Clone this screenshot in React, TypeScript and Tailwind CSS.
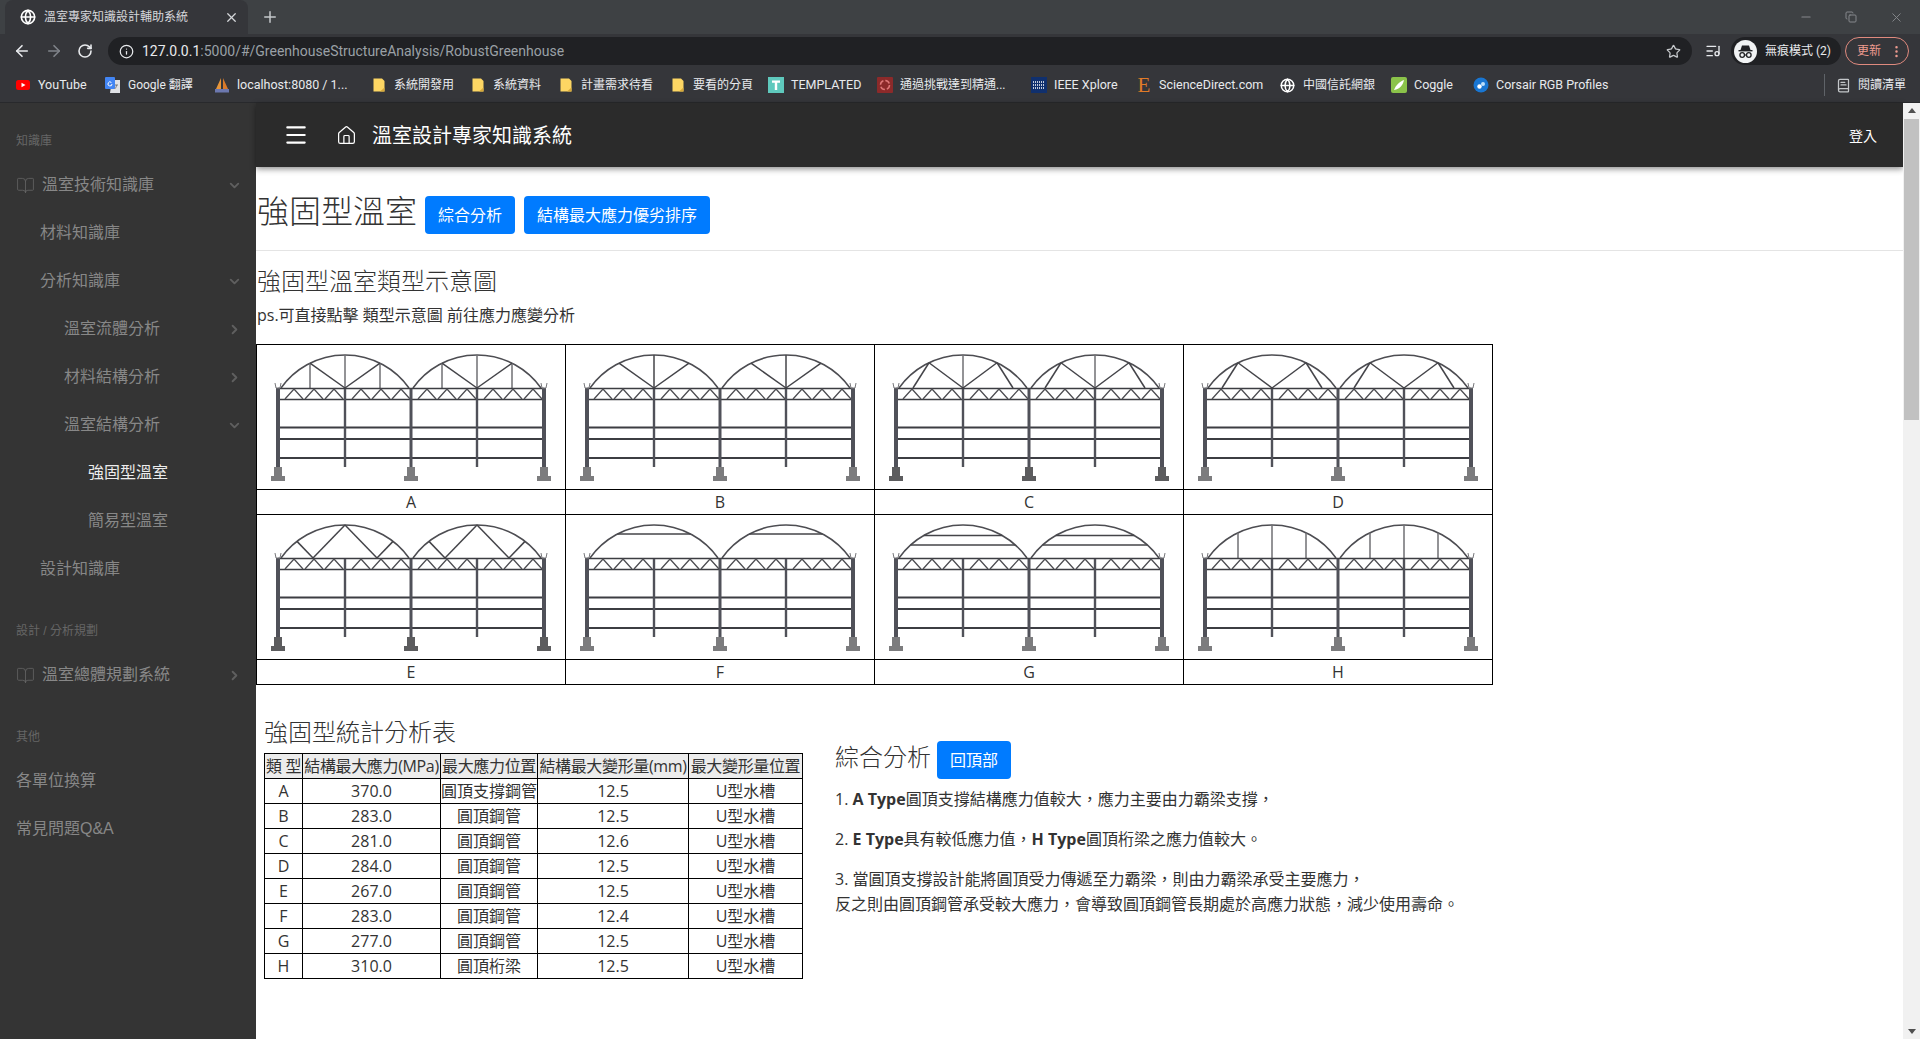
import React from "react";
import { ArrowLeft, ArrowRight, RotateCw, Info, Star, X, Plus, Minus, Copy, Globe, Menu, House, BookOpen, ChevronDown, ChevronRight, EllipsisVertical, ListMusic, BookText } from "lucide-react";

const R = 78.5;
const archY = (c: number, x: number) => 88.5 - Math.sqrt(R * R - (x - c) * (x - c));

function Braces({ type, c }: { type: string; c: number }) {
  const line = "#444449";
  const soft = "#6f6f73";
  const top = (dx: number) => archY(c, c + dx);
  const seg = (x1: number, y1: number, x2: number, y2: number, col = line, w = 1.5) => (
    <line key={`${x1}-${y1}-${x2}-${y2}`} x1={x1} y1={y1} x2={x2} y2={y2} stroke={col} strokeWidth={w} />
  );
  const bar = (y: number) => {
    const h = Math.sqrt(R * R - (88.5 - y) * (88.5 - y));
    return seg(c - h, y, c + h, y, line, 1.5);
  };
  const out: React.ReactNode[] = [];
  if (type === "A") {
    out.push(seg(c, 10, c, 43, soft, 1.5), seg(c - 35, top(35), c - 35, 43, soft), seg(c + 35, top(35), c + 35, 43, soft));
    out.push(seg(c - 35, top(35), c, 43), seg(c + 35, top(35), c, 43));
  }
  if (type === "B") {
    out.push(seg(c, 10, c, 43, line, 1.5), seg(c - 35, top(35), c, 43), seg(c + 35, top(35), c, 43));
  }
  if (type === "C" || type === "D") {
    if (type === "C") out.push(seg(c, 10, c, 43, soft, 1.5));
    out.push(seg(c - 34, top(34), c, 43), seg(c + 34, top(34), c, 43));
    out.push(seg(c - 34, top(34), c - 50, 43), seg(c + 34, top(34), c + 50, 43));
  }
  if (type === "E") {
    out.push(seg(c, 10, c - 32, 43), seg(c, 10, c + 32, 43), seg(c - 48, top(48), c - 32, 43), seg(c + 48, top(48), c + 32, 43));
  }
  if (type === "F") out.push(bar(19));
  if (type === "G") out.push(bar(20.5), bar(30));
  if (type === "H") {
    out.push(seg(c, 10, c, 43, soft, 1.5), seg(c - 34, top(34), c - 34, 43, soft), seg(c + 34, top(34), c + 34, 43, soft));
  }
  return <g>{out}</g>;
}

function Greenhouse({ type }: { type: string }) {
  const rail = "#3c3d42";
  const post = "#505159";
  const base = type === "C" || type === "E" ? "#5c5c5e" : "#7c7c7e";
  const bays = [21, 88, 154, 220];
  return (
    <svg viewBox="0 0 308 144" className="block h-[144px] w-full">
      <path d="M24 43A78.5 78.5 0 0 1 152 43" fill="none" stroke="#4d4d52" strokeWidth="1.6" />
      <path d="M156 43A78.5 78.5 0 0 1 284 43" fill="none" stroke="#4d4d52" strokeWidth="1.6" />
      <Braces type={type} c={88} />
      <Braces type={type} c={220} />
      <line x1="21" y1="43.5" x2="287" y2="43.5" stroke={rail} strokeWidth="1.6" />
      <line x1="21" y1="54.5" x2="287" y2="54.5" stroke={rail} strokeWidth="1.5" />
      {bays.map((s) =>
        [7, 27, 47].map((o) => (
          <polyline key={s + o} points={`${s + o},54 ${s + o + 9},44 ${s + o + 18},54`} fill="none" stroke="#4d4d52" strokeWidth="1.3" />
        ))
      )}
      {[82.5, 94, 113].map((y) => (
        <line key={y} x1="21" y1={y} x2="287" y2={y} stroke={rail} strokeWidth="1.9" />
      ))}
      {[88, 220].map((x) => (
        <line key={x} x1={x} y1="44" x2={x} y2="122" stroke={post} strokeWidth="2.4" />
      ))}
      <line x1="154" y1="44" x2="154" y2="122" stroke={post} strokeWidth="3" />
      {[21, 287].map((x) => (
        <g key={x}>
          <line x1={x} y1="43" x2={x} y2="122" stroke={post} strokeWidth="4" />
          <path d={`M${x - 3} 38L${x - 2} 43L${x + 2} 43L${x + 3} 38`} fill="none" stroke="#77777b" strokeWidth="1" />
        </g>
      ))}
      {[21, 154, 287].map((x) => (
        <g key={x} fill={base}>
          <rect x={x - 4} y="122" width="8" height="9.5" />
          <rect x={x - 7} y="131" width="14" height="5" />
        </g>
      ))}
    </svg>
  );
}

const Folder = () => (
  <svg width="16" height="16" viewBox="0 0 16 16">
    <path d="M2.5 1.5h8.5l2.5 2.5v10.5h-11z" fill="#fdd663" />
    <path d="M9 14.5l4.5-4v4z" fill="#d8a93a" />
  </svg>
);

const marks: { w: string; t: string; i: React.ReactNode }[] = [
  {
    w: "w-[90px]",
    t: "YouTube",
    i: (
      <svg width="16" height="16" viewBox="0 0 16 16">
        <rect x="1" y="3" width="14" height="10" rx="2.5" fill="#f00" />
        <path d="M6.5 5.8v4.4L10.5 8z" fill="#fff" />
      </svg>
    ),
  },
  {
    w: "w-[109px]",
    t: "Google 翻譯",
    i: (
      <svg width="16" height="16" viewBox="0 0 16 16">
        <path d="M7 3h8v13H5z" fill="#dfe1e5" />
        <rect x="0" y="0" width="10" height="12" rx="1" fill="#4285f4" />
        <path d="M7 7a2 2 0 1 1-.6-1.5" fill="none" stroke="#fff" strokeWidth="1" />
        <path d="M10 8h3M11.5 8c0 2-1 3-2 4" fill="none" stroke="#777" strokeWidth="1" />
      </svg>
    ),
  },
  {
    w: "w-[157px]",
    t: "localhost:8080 / 1...",
    i: (
      <svg width="16" height="16" viewBox="0 0 16 16">
        <path d="M7 1L2 12h5z" fill="#e8963a" />
        <path d="M9 1l5 11H9z" fill="#d97a2a" />
        <rect x="1" y="12" width="14" height="3.5" fill="#6c78af" />
      </svg>
    ),
  },
  { w: "w-[99px]", t: "系統開發用", i: <Folder /> },
  { w: "w-[88px]", t: "系統資料", i: <Folder /> },
  { w: "w-[112px]", t: "計畫需求待看", i: <Folder /> },
  { w: "w-[98px]", t: "要看的分頁", i: <Folder /> },
  {
    w: "w-[109px]",
    t: "TEMPLATED",
    i: (
      <svg width="16" height="16" viewBox="0 0 16 16">
        <rect width="16" height="16" fill="#5fc9bd" />
        <path d="M4 3.5h8v2.2H9.2V13H6.8V5.7H4z" fill="#fff" />
      </svg>
    ),
  },
  {
    w: "w-[154px]",
    t: "通過挑戰達到精通...",
    i: (
      <svg width="16" height="16" viewBox="0 0 16 16">
        <rect width="16" height="16" rx="1" fill="#8c2a2a" />
        <circle cx="8" cy="8" r="4.5" fill="none" stroke="#d77" strokeWidth="1.5" strokeDasharray="5 2" />
      </svg>
    ),
  },
  {
    w: "w-[105px]",
    t: "IEEE Xplore",
    i: (
      <svg width="16" height="16" viewBox="0 0 16 16">
        <rect width="16" height="16" fill="#10306e" />
        <path d="M2 5h12M2 8h12M2 11h12" stroke="#fff" strokeWidth="1.5" strokeDasharray="1 1" />
      </svg>
    ),
  },
  {
    w: "w-[144px]",
    t: "ScienceDirect.com",
    i: <span className="block w-4 text-center font-['Liberation_Serif',serif] text-[21px] leading-4 text-[#e07b28]">E</span>,
  },
  { w: "w-[111px]", t: "中國信託網銀", i: <Globe size={15} strokeWidth={2.4} className="text-white" /> },
  {
    w: "w-[82px]",
    t: "Coggle",
    i: (
      <svg width="16" height="16" viewBox="0 0 16 16">
        <rect width="16" height="16" rx="2" fill="#8bc34a" />
        <path d="M3 13c2-5 5-8 10-10-1 5-4 9-10 10z" fill="#fff" />
      </svg>
    ),
  },
  {
    w: "w-[130px]",
    t: "Corsair RGB Profiles",
    i: (
      <svg width="16" height="16" viewBox="0 0 16 16">
        <circle cx="8" cy="8" r="7.5" fill="#1976d2" />
        <circle cx="6.5" cy="9.5" r="2.2" fill="#fff" />
        <circle cx="10" cy="7" r="2" fill="#bbdefb" />
      </svg>
    ),
  },
];

const Incognito = () => (
  <svg width="23" height="23" viewBox="0 0 23 23">
    <circle cx="11.5" cy="11.5" r="11.5" fill="#f1f3f4" />
    <path d="M8 5.5h7l1.5 4.5h-10z" fill="#202124" />
    <rect x="4.5" y="10" width="14" height="1.4" fill="#202124" />
    <circle cx="8.2" cy="15" r="2.3" fill="none" stroke="#202124" strokeWidth="1.3" />
    <circle cx="14.8" cy="15" r="2.3" fill="none" stroke="#202124" strokeWidth="1.3" />
    <path d="M10.5 15h2" stroke="#202124" strokeWidth="1.2" />
  </svg>
);

function Chrome() {
  return (
    <div className="font-['Roboto','Noto_Sans_CJK_TC',sans-serif] text-[#e8eaed]">
      <div className="flex h-[34px] items-end bg-[#3e4144]">
        <div className="ml-[5px] flex h-[34px] w-[243px] items-center rounded-t-lg bg-[#35363a] pl-[15px] pr-[9px]">
          <Globe size={16} strokeWidth={2.4} className="shrink-0 text-white" />
          <span className="ml-[8px] flex-1 whitespace-nowrap text-[12px] text-[#d5d7da]">溫室專家知識設計輔助系統</span>
          <X size={15} className="text-[#d5d7da]" />
        </div>
        <div className="ml-[13px] flex h-[34px] items-center">
          <Plus size={18} className="text-[#c4c7ca]" />
        </div>
        <div className="ml-auto flex h-[34px] items-center gap-[32px] pr-[16px] text-[#85888c]">
          <Minus size={14} />
          <Copy size={12} />
          <X size={15} strokeWidth={1.5} />
        </div>
      </div>
      <div className="flex h-[34px] items-center bg-[#35363a]">
        <div className="flex w-[108px] items-center gap-[14px] pl-[13px]">
          <ArrowLeft size={18} strokeWidth={2.2} className="text-[#e8eaed]" />
          <ArrowRight size={18} strokeWidth={2.2} className="text-[#80848a]" />
          <RotateCw size={16} strokeWidth={2.4} className="text-[#e8eaed]" />
        </div>
        <div className="flex h-[28px] w-[1584px] items-center rounded-full bg-[#202124] pl-[11px] pr-[11px]">
          <Info size={15} strokeWidth={2} className="text-[#e8eaed]" />
          <span className="ml-[8px] whitespace-nowrap pt-[1px] text-[14px] text-[#9aa0a6]">
            <span className="text-[#e8eaed]">127.0.0.1</span>:5000/#/GreenhouseStructureAnalysis/RobustGreenhouse
          </span>
          <Star size={15} className="ml-auto text-[#c6c9cc]" />
        </div>
        <ListMusic size={16} className="ml-[13px] text-[#e8eaed]" />
        <div className="ml-[10px] flex h-[28px] w-[110px] items-center rounded-full bg-[#202124] pl-[3px]">
          <span className="block h-[23px] w-[23px]">
            <Incognito />
          </span>
          <span className="ml-[8px] whitespace-nowrap text-[12px] text-[#e8eaed]">無痕模式 (2)</span>
        </div>
        <div className="ml-[4px] flex h-[28px] w-[64px] items-center justify-between rounded-full border border-[#e08a7e] pl-[11px] pr-[4px] text-[12px] text-[#ee9b8f]">
          更新
          <EllipsisVertical size={15} />
        </div>
      </div>
      <div className="flex h-[34px] items-center bg-[#35363a] pl-[15px] text-[12px] text-[#e8eaed]">
        {marks.map((m) => (
          <div
            key={m.t}
            className={`${m.w} flex shrink-0 items-center gap-[7px] whitespace-nowrap ${/^[\x00-\x7f]+$/.test(m.t) ? "text-[12.5px]" : "text-[12px]"}`}
          >
            <span className="block w-4 shrink-0">{m.i}</span>
            {m.t}
          </div>
        ))}
        <div className="ml-[221px] h-[22px] w-px bg-[#5f6368]" />
        <BookText size={15} className="ml-[11px] text-[#c4c7ca]" />
        <span className="ml-[7px] whitespace-nowrap">閱讀清單</span>
      </div>
      <div className="h-px bg-[#28292c]" />
    </div>
  );
}

type Row = { t: string; pl: string; chev?: "d" | "r"; book?: boolean; active?: boolean };

const Head = ({ t }: { t: string }) => (
  <div className="mt-[18px] flex h-10 items-center pl-4 text-[12px] text-[#666]">{t}</div>
);

const Item = ({ t, pl, chev, book, active }: Row) => (
  <div className={`flex h-12 items-center ${pl} pr-[14px] text-[16px] ${active ? "text-[#ececec]" : "text-[#878787]"}`}>
    {book && <BookOpen size={19} strokeWidth={1} className="mr-[7px] text-[#666]" />}
    <span className="whitespace-nowrap">{t}</span>
    {chev === "d" && <ChevronDown size={15} strokeWidth={3} className="ml-auto text-[#5f5f5f]" />}
    {chev === "r" && <ChevronRight size={15} strokeWidth={3} className="ml-auto text-[#5f5f5f]" />}
  </div>
);

function Sidebar() {
  return (
    <aside className="h-full w-[256px] shrink-0 bg-[#343434] font-['Liberation_Sans','Noto_Sans_CJK_TC',sans-serif]">
      <Head t="知識庫" />
      <Item t="溫室技術知識庫" pl="pl-4" chev="d" book />
      <Item t="材料知識庫" pl="pl-[40px]" />
      <Item t="分析知識庫" pl="pl-[40px]" chev="d" />
      <Item t="溫室流體分析" pl="pl-[64px]" chev="r" />
      <Item t="材料結構分析" pl="pl-[64px]" chev="r" />
      <Item t="溫室結構分析" pl="pl-[64px]" chev="d" />
      <Item t="強固型溫室" pl="pl-[88px]" active />
      <Item t="簡易型溫室" pl="pl-[88px]" />
      <Item t="設計知識庫" pl="pl-[40px]" />
      <Head t="設計 / 分析規劃" />
      <Item t="溫室總體規劃系統" pl="pl-4" chev="r" book />
      <Head t="其他" />
      <Item t="各單位換算" pl="pl-4" />
      <Item t="常見問題Q&A" pl="pl-4" />
    </aside>
  );
}

const rowsA = ["A", "B", "C", "D"];
const rowsB = ["E", "F", "G", "H"];

function Diagrams() {
  const row = (list: string[]) => (
    <>
      <tr>
        {list.map((t) => (
          <td key={t} className="border border-black p-0">
            <Greenhouse type={t} />
          </td>
        ))}
      </tr>
      <tr className="h-[24px]">
        {list.map((t) => (
          <td key={t} className="border border-black p-0 text-center text-[16px] leading-[24px] text-[#333]">
            {t}
          </td>
        ))}
      </tr>
    </>
  );
  return (
    <table className="mt-[17px] w-[1237px] table-fixed border-collapse">
      <tbody>
        {row(rowsA)}
        {row(rowsB)}
      </tbody>
    </table>
  );
}

const stats = [
  ["A", "370.0", "圓頂支撐鋼管", "12.5"],
  ["B", "283.0", "圓頂鋼管", "12.5"],
  ["C", "281.0", "圓頂鋼管", "12.6"],
  ["D", "284.0", "圓頂鋼管", "12.5"],
  ["E", "267.0", "圓頂鋼管", "12.5"],
  ["F", "283.0", "圓頂鋼管", "12.4"],
  ["G", "277.0", "圓頂鋼管", "12.5"],
  ["H", "310.0", "圓頂桁梁", "12.5"],
];

function StatTable() {
  const th = "border border-black bg-[#ececec] p-0 text-center font-normal tracking-[-0.35px] whitespace-nowrap";
  const td = "border border-black p-0 text-center whitespace-nowrap";
  return (
    <table className="mt-[3px] w-[538px] table-fixed border-collapse text-[16px] leading-[24px] text-[#333]">
      <colgroup>
        <col className="w-[38px]" />
        <col className="w-[138px]" />
        <col className="w-[97px]" />
        <col className="w-[151px]" />
        <col className="w-[114px]" />
      </colgroup>
      <thead>
        <tr className="h-[25px]">
          <th className={th}>類 型</th>
          <th className={th}>結構最大應力(MPa)</th>
          <th className={th}>最大應力位置</th>
          <th className={th}>結構最大變形量(mm)</th>
          <th className={th}>最大變形量位置</th>
        </tr>
      </thead>
      <tbody>
        {stats.map((r) => (
          <tr key={r[0]} className="h-[25px]">
            {r.map((c, i) => (
              <td key={i} className={td}>
                {c}
              </td>
            ))}
            <td className={td}>U型水槽</td>
          </tr>
        ))}
      </tbody>
    </table>
  );
}

const Btn = ({ t }: { t: string }) => (
  <span className="flex h-[38px] items-center whitespace-nowrap rounded-[4px] bg-[#007bff] px-[13px] text-[16px] text-white">{t}</span>
);

function Content() {
  return (
    <main className="min-w-0 flex-1 bg-white font-['Open_Sans','Noto_Sans_CJK_TC',sans-serif] text-[#333]">
      <header className="flex h-[64px] items-center bg-[#2b2b2b] pl-[27px] pr-[26px] text-white shadow-[0_2px_6px_rgba(0,0,0,0.45)]">
        <Menu size={26} strokeWidth={2} />
        <House size={21} strokeWidth={1.4} className="ml-[27px]" />
        <span className="ml-[15px] whitespace-nowrap pt-[2px] text-[20px]">溫室設計專家知識系統</span>
        <span className="ml-auto text-[14px]">登入</span>
      </header>
      <div className="mt-[29px] flex h-[38px] items-center gap-[9px] pl-[1px]">
        <h1 className="mb-[8px] mr-[-1px] whitespace-nowrap text-[32px] font-light leading-[38px]">強固型溫室</h1>
        <Btn t="綜合分析" />
        <Btn t="結構最大應力優劣排序" />
      </div>
      <hr className="mt-[16px] border-0 border-t border-[#e4e4e4]" />
      <h3 className="mt-[12px] h-[36px] pl-[1px] text-[24px] font-light leading-[36px]">強固型溫室類型示意圖</h3>
      <p className="mt-[4px] h-6 pl-[1px] text-[16px] leading-6">ps.可直接點擊 類型示意圖 前往應力應變分析</p>
      <Diagrams />
      <div className="mt-[30px] flex">
        <div className="ml-[8px] w-[571px]">
          <h4 className="mt-[-1px] h-[36px] text-[24px] font-light leading-[36px]">強固型統計分析表</h4>
          <StatTable />
        </div>
        <div className="pt-[26px]">
          <div className="flex h-[38px] items-center gap-[6px]">
            <h4 className="mb-[6px] whitespace-nowrap text-[24px] font-light">綜合分析</h4>
            <Btn t="回頂部" />
          </div>
          <p className="mt-[8px] text-[16px] leading-6">
            1. <b>A Type</b>圓頂支撐結構應力值較大，應力主要由力霸梁支撐，
          </p>
          <p className="mt-4 text-[16px] leading-6">
            2. <b>E Type</b>具有較低應力值，<b>H Type</b>圓頂桁梁之應力值較大。
          </p>
          <p className="mt-4 text-[16px] leading-[25px]">
            3. 當圓頂支撐設計能將圓頂受力傳遞至力霸梁，則由力霸梁承受主要應力，
            <br />
            反之則由圓頂鋼管承受較大應力，會導致圓頂鋼管長期處於高應力狀態，減少使用壽命。
          </p>
        </div>
      </div>
    </main>
  );
}

function Scrollbar() {
  return (
    <div className="flex h-full w-[17px] shrink-0 flex-col items-center bg-[#f1f1f1]">
      <div className="mt-[5px] h-0 w-0 border-x-[4px] border-b-[5px] border-x-transparent border-b-[#505050]" />
      <div className="mt-[6px] h-[301px] w-[15px] bg-[#c1c1c1]" />
      <div className="mt-auto mb-[5px] h-0 w-0 border-x-[4px] border-t-[5px] border-x-transparent border-t-[#505050]" />
    </div>
  );
}

export default function App() {
  return (
    <div className="flex h-[1039px] flex-col overflow-hidden bg-white">
      <Chrome />
      <div className="flex min-h-0 flex-1">
        <Sidebar />
        <Content />
        <Scrollbar />
      </div>
    </div>
  );
}
